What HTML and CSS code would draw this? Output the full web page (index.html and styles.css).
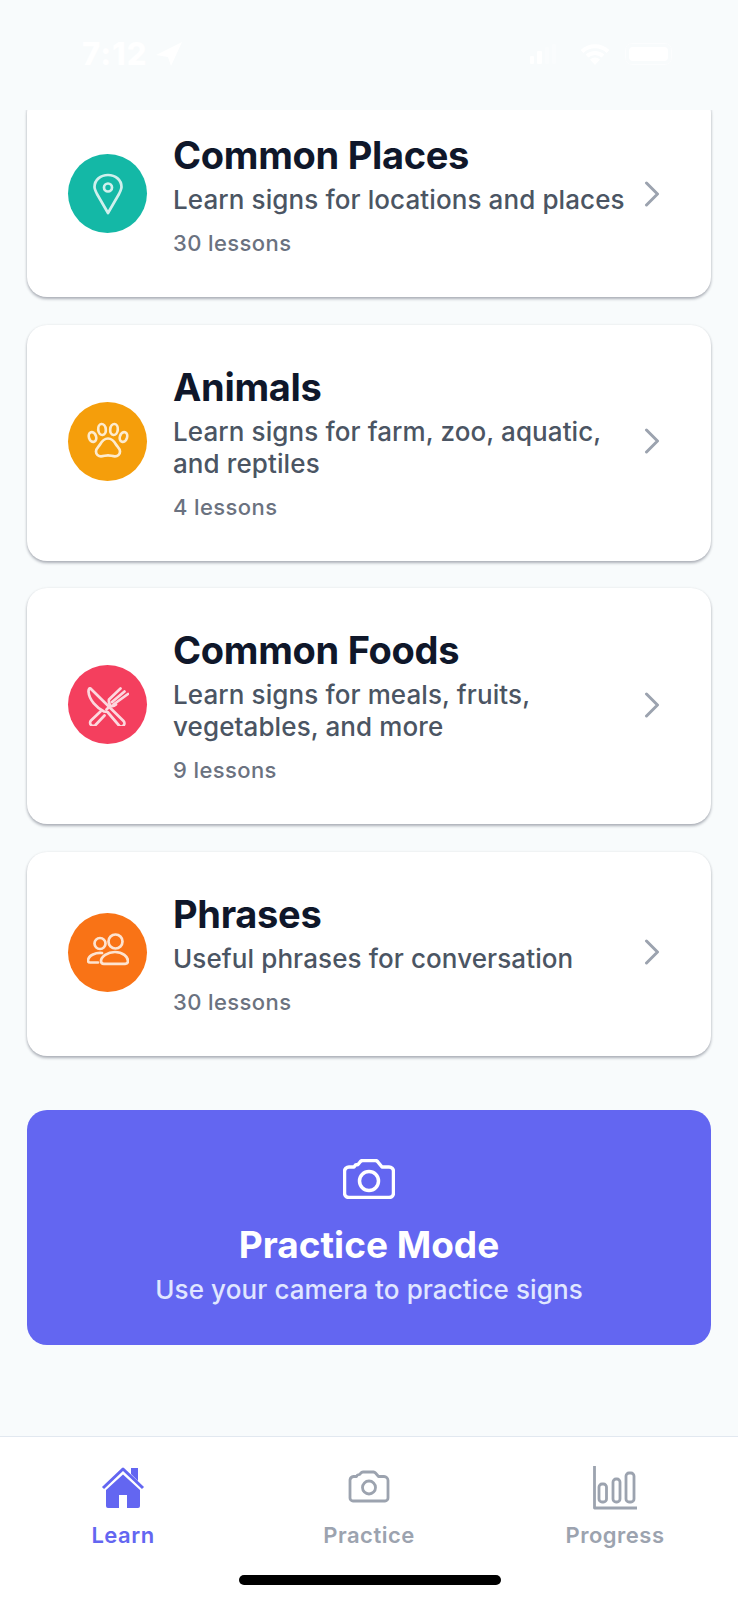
FILE: index.html
```html
<!DOCTYPE html>
<html lang="en">
  <head>
    <meta charset="UTF-8" />
    <meta name="viewport" content="width=device-width, initial-scale=1.0" />
    <title>Learn</title>
    <link rel="stylesheet" href="styles.css">
  </head>
  <body>
    <header class="status-bar">
      <div class="status-left">
        <span class="status-time">7:12</span>
        <svg class="status-arrow" viewBox="0 0 28 26"><path d="M27 1 1 14l12 2 3 9z" /></svg>
      </div>
      <div class="status-right">
        <svg class="status-signal" viewBox="0 0 26 20"><rect x="0" y="12" width="4" height="8" rx="1" /><rect x="7" y="7" width="5" height="13" rx="1" /><rect x="15" y="3" width="4" height="17" rx="1" opacity="0.3" /><rect x="22" y="0" width="4" height="20" rx="1" opacity="0.3" /></svg>
        <svg class="status-wifi" viewBox="0 0 30 22"><path d="M15 22 10 16.500a7.500 7.500 0 0 1 10 0z" /><path class="wifi-arc" d="M2 8.500a19 19 0 0 1 26 0" /><path class="wifi-arc" d="M7 13a12 12 0 0 1 16 0" /></svg>
        <div class="status-battery"><div class="status-battery-fill"></div></div>
      </div>
    </header>

    <main class="scroll-area">
      <div class="card-list">
        <a class="card">
          <div class="card-icon icon-teal">
            <svg viewBox="0 0 42 42"><path d="M21 40 10 21C8 17 7.500 15 7.500 14 7.500 7 13.500 2 21 2S34.500 7 34.500 14c0 1-.5 3-2.500 7z" /><circle cx="21" cy="14.500" r="4" /></svg>
          </div>
          <div class="card-text">
            <h2>Common Places</h2>
            <p class="card-desc">Learn signs for locations and places</p>
            <p class="card-count">30 lessons</p>
          </div>
          <svg class="chevron" viewBox="0 0 16 26"><path d="M2.500 2 13.500 13 2.500 24" /></svg>
        </a>

        <a class="card">
          <div class="card-icon icon-amber">
            <svg viewBox="0 0 42 42"><ellipse cx="5.500" cy="17" rx="3.600" ry="5" transform="rotate(-18 5.500 17)" /><ellipse cx="15" cy="9.500" rx="3.800" ry="5.500" transform="rotate(-6 15 9.500)" /><ellipse cx="27" cy="9.500" rx="3.800" ry="5.500" transform="rotate(6 27 9.500)" /><ellipse cx="36.500" cy="17" rx="3.600" ry="5" transform="rotate(18 36.500 17)" /><path d="M21 18.500c4 0 6 2.500 8 6 1.300 2.300 4 3.700 4 7 0 3-2.400 4.800-5 4.800-2.600 0-4.500-1-7-1s-4.400 1-7 1c-2.600 0-5-1.800-5-4.800 0-3.300 2.700-4.700 4-7 2-3.500 4-6 8-6z" /></svg>
          </div>
          <div class="card-text">
            <h2>Animals</h2>
            <p class="card-desc">Learn signs for farm, zoo, aquatic, and reptiles</p>
            <p class="card-count">4 lessons</p>
          </div>
          <svg class="chevron" viewBox="0 0 16 26"><path d="M2.500 2 13.500 13 2.500 24" /></svg>
        </a>

        <a class="card">
          <div class="card-icon icon-red">
            <svg viewBox="0 0 42 42"><path d="M3.500 4.500 36.500 37a3 3 0 0 1-4.500 4.500L20.500 28 17 27.500C10 24 2 16 1.500 7.500c0-2.500 1-3.500 2-3z" /><path d="M13.500 27.500 4 36.500A3 3 0 0 0 8.500 41L17.500 31.500" /><path d="M23.500 21.500 19.500 25.500M22 15.500 33.500 4.500M26.500 20.500 41 10M25 18 37.500 7.500M22 15.500c-.5 2.500.2 4.500 1.500 6 1.500 1.200 3.500.8 5.500-1" /></svg>
          </div>
          <div class="card-text">
            <h2>Common Foods</h2>
            <p class="card-desc">Learn signs for meals, fruits, vegetables, and more</p>
            <p class="card-count">9 lessons</p>
          </div>
          <svg class="chevron" viewBox="0 0 16 26"><path d="M2.500 2 13.500 13 2.500 24" /></svg>
        </a>

        <a class="card">
          <div class="card-icon icon-orange">
            <svg viewBox="0 0 42 42"><circle cx="13" cy="12.500" r="5.500" /><circle cx="28.500" cy="10.500" r="7" /><path d="M15 22c-6-.6-13.500 2-14 7.500 0 1.300.7 2 2 2h8" /><path d="M28 21c7.500 0 13 4.500 13 9 0 1.800-1 2.800-2.800 2.800H16.800C15 32.800 14 31.800 14 30c0-4.500 6.500-9 14-9z" /></svg>
          </div>
          <div class="card-text">
            <h2>Phrases</h2>
            <p class="card-desc">Useful phrases for conversation</p>
            <p class="card-count">30 lessons</p>
          </div>
          <svg class="chevron" viewBox="0 0 16 26"><path d="M2.500 2 13.500 13 2.500 24" /></svg>
        </a>
      </div>

      <a class="practice-card">
        <svg class="practice-icon" viewBox="0 0 52 40"><path d="M6 8h5l1.500-2 2.500-.5 2.500-3a3 3 0 0 1 2-1h13a3 3 0 0 1 2 1L39 8h7a4.500 4.500 0 0 1 4.500 4.500V34a4.500 4.500 0 0 1-4.500 4.500H6A4.500 4.500 0 0 1 1.500 34V12.500A4.500 4.500 0 0 1 6 8z" /><circle cx="26" cy="22" r="9.500" /></svg>
        <h2>Practice Mode</h2>
        <p>Use your camera to practice signs</p>
      </a>
    </main>

    <nav class="tab-bar">
      <div class="tab tab-active">
        <svg class="tab-icon" viewBox="0 0 46 44"><path class="house-roof" d="M3 21 23 2l20 19" /><path class="house-fill" d="M31 7V1h7v13z" /><path class="house-fill" d="M23 7.500 6 23v16a2 2 0 0 0 2 2h11V28h8v13h11a2 2 0 0 0 2-2V23z" /></svg>
        <span>Learn</span>
      </div>
      <div class="tab">
        <svg class="tab-icon" viewBox="0 0 46 44"><path d="M7.500 9.500h3l1-1.500 2-.5 2-2a3 3 0 0 1 2-.5h10a3 3 0 0 1 2 1l3 3.500h5.500a4 4 0 0 1 4 4V31a3 3 0 0 1-3 3H7a3 3 0 0 1-3-3V13a4 4 0 0 1 3.500-3.500z" /><circle cx="23" cy="20.500" r="6.500" /></svg>
        <span>Practice</span>
      </div>
      <div class="tab">
        <svg class="tab-icon" viewBox="0 0 46 44"><path d="M2.500-1V41H45" /><rect x="7" y="17" width="7.500" height="18" rx="3" /><rect x="21" y="12" width="7" height="23" rx="3" /><rect x="34" y="6" width="8" height="29" rx="3" /></svg>
        <span>Progress</span>
      </div>
      <div class="home-indicator"></div>
    </nav>
  </body>
</html>
```

FILE: styles.css
```css
* {
  margin: 0;
  padding: 0;
  box-sizing: border-box;
  font-family: Inter, "Noto Sans", sans-serif;
}

body {
  width: 738px;
  height: 1600px;
  display: flex;
  flex-direction: column;
  background-color: #f8fbfc;
  overflow: hidden;
}

.status-bar {
  height: 110px;
  flex-shrink: 0;
  display: flex;
  justify-content: space-between;
  align-items: flex-start;
  padding: 37px 66px 0 82px;
}

.status-left,
.status-right {
  display: flex;
  align-items: center;
}

.status-left {
  gap: 7px;
}

.status-right {
  padding-top: 6px;
}

.status-time {
  font-size: 31px;
  font-weight: 800;
  line-height: 34px;
  letter-spacing: 1px;
  color: #ffffff;
}

.status-arrow {
  width: 28px;
  height: 26px;
  fill: #ffffff;
}

.status-signal {
  width: 26px;
  height: 20px;
  margin-right: 24px;
  fill: #ffffff;
}

.status-wifi {
  width: 30px;
  height: 22px;
  margin-right: 15px;
  fill: #ffffff;
}

.wifi-arc {
  fill: none;
  stroke: #ffffff;
  stroke-width: 4;
}

.status-battery {
  width: 47px;
  height: 22px;
  padding: 3px;
  border: 1px solid #fcfdfe;
  border-radius: 7px;
}

.status-battery-fill {
  width: 100%;
  height: 100%;
  border-radius: 4px;
  background-color: #ffffff;
}

.scroll-area {
  flex: 1;
  overflow: hidden;
  padding: 0 27px;
}

.card-list {
  display: flex;
  flex-direction: column;
  gap: 27.600px;
  margin-top: -17px;
}

.card {
  display: flex;
  align-items: center;
  padding: 40px 51px 39px 41px;
  background-color: white;
  border-radius: 20px;
  box-shadow: 0 2px 3px rgba(15, 23, 42, 0.32), 0 0 3px rgba(15, 23, 42, 0.06);
}

.card-icon {
  width: 79px;
  height: 79px;
  flex-shrink: 0;
  display: flex;
  align-items: center;
  justify-content: center;
  margin-bottom: 4px;
  border-radius: 50%;
}

.card-icon svg {
  width: 42px;
  height: 42px;
  fill: none;
  stroke: white;
  stroke-width: 2.700;
  stroke-linecap: round;
  stroke-linejoin: round;
  opacity: 0.8;
}

.icon-teal {
  background-color: #14b8a6;
}

.icon-amber {
  background-color: #f59e0b;
}

.icon-red {
  background-color: #f43f5e;
}

.icon-orange {
  background-color: #f97316;
}

.card-text {
  flex: 1;
  margin-left: 26px;
}

.card-text h2 {
  font-size: 38px;
  font-weight: 700;
  line-height: 44px;
  letter-spacing: -0.3px;
  color: #0f172a;
}

.card-desc {
  margin-top: 7px;
  font-size: 26px;
  font-weight: 500;
  line-height: 32px;
  letter-spacing: 0.1px;
  color: #4b5563;
}

.card-count {
  margin-top: 12px;
  font-size: 22px;
  font-weight: 500;
  line-height: 30px;
  letter-spacing: 0.4px;
  color: #6b7280;
}

.chevron {
  width: 16px;
  height: 26px;
  flex-shrink: 0;
  margin-left: 14px;
  margin-bottom: 4px;
  fill: none;
  stroke: #9ca3af;
  stroke-width: 3;
  stroke-linecap: round;
  stroke-linejoin: round;
}

.practice-card {
  display: flex;
  flex-direction: column;
  align-items: center;
  height: 235px;
  margin-top: 54px;
  padding-top: 49px;
  background-color: #6366f1;
  border-radius: 20px;
}

.practice-icon {
  width: 52px;
  height: 40px;
  fill: none;
  stroke: white;
  stroke-width: 3.500;
  stroke-linejoin: round;
}

.practice-card h2 {
  margin-top: 24px;
  font-size: 37px;
  font-weight: 700;
  line-height: 44px;
  color: white;
}

.practice-card p {
  margin-top: 7px;
  font-size: 26px;
  font-weight: 500;
  line-height: 32px;
  letter-spacing: 0.1px;
  color: #e0e7ff;
}

.tab-bar {
  position: relative;
  height: 164px;
  flex-shrink: 0;
  display: flex;
  padding-top: 30px;
  background-color: white;
  border-top: 1px solid #e2e8f0;
}

.tab {
  flex: 1;
  display: flex;
  flex-direction: column;
  align-items: center;
  color: #9ca3af;
  font-size: 22px;
  font-weight: 600;
  letter-spacing: 0.5px;
}

.tab span {
  margin-top: 10px;
  line-height: 28px;
}

.tab-icon {
  width: 46px;
  height: 44px;
  fill: none;
  stroke: #9ca3af;
  stroke-width: 2.800;
  stroke-linejoin: round;
  overflow: visible;
}

.tab-active {
  color: #6366f1;
}

.tab-active .tab-icon {
  stroke: none;
}

.house-roof {
  fill: none;
  stroke: #6366f1;
  stroke-width: 3;
}

.house-fill {
  fill: #6366f1;
}

.home-indicator {
  position: absolute;
  left: 239px;
  bottom: 15px;
  width: 262px;
  height: 10px;
  border-radius: 5px;
  background-color: black;
}
```
